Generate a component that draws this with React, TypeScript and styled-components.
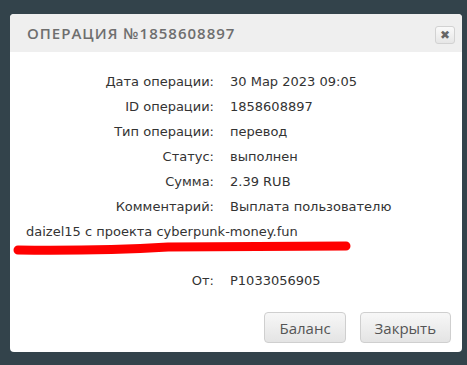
import React from 'react';
import styled, {createGlobalStyle} from 'styled-components';

const Global = createGlobalStyle`
  html, body {
    margin: 0;
    padding: 0;
    background: #33434b;
  }
  body {
    width: 467px;
    height: 365px;
    overflow: hidden;
    font-family: "DejaVu Sans", "Open Sans", sans-serif;
  }
`

const Dialog = styled.div`
  margin: 14px 0 0 10px;
  width: 452px;
  background: #fff;
  border-radius: 4px;
  overflow: hidden;
`

const Header = styled.div`
  height: 38px;
  background: #efefef;
  display: flex;
  align-items: center;
  justify-content: space-between;
  padding: 0 7px 0 17px;
  h2 {
    margin: 0;
    font-family: "Open Sans", sans-serif;
    font-size: 15px;
    font-weight: 600;
    letter-spacing: 1px;
    color: #6e6e6e;
  }
`

const CloseBtn = styled.button`
  width: 20px;
  height: 18px;
  margin-top: 4px;
  padding: 0;
  border: 1px solid #d2d2d2;
  border-radius: 3px;
  background: linear-gradient(#fafafa, #e6e6e6);
  color: #666;
  font-size: 12px;
  line-height: 16px;
  font-family: "DejaVu Sans", sans-serif;
`

const Body = styled.div`
  position: relative;
  padding: 17px 16px 0 16px;
  color: #333;
  font-size: 13px;
  line-height: 25px;
`

const Row = styled.div<{ $gap?: number }>`
  margin-bottom: ${p => p.$gap || 0}px;
`

const Label = styled.span`
  display: inline-block;
  width: 188px;
  margin-right: 16px;
  text-align: right;
`

const Strike = styled.svg`
  position: absolute;
  left: -10px;
  top: 0;
  pointer-events: none;
`

const Footer = styled.div`
  display: flex;
  justify-content: flex-end;
  gap: 14px;
  padding: 19px 11px 9px 0;
`

const Button = styled.button`
  height: 31px;
  padding: 0 14px;
  border: 1px solid #cfcfcf;
  border-radius: 4px;
  background: linear-gradient(#f7f7f7, #e4e4e4);
  color: #555;
  font-family: "Open Sans", sans-serif;
  font-size: 15px;
`

const rows: [string, string][] = [
    ['Дата операции:', '30 Мар 2023 09:05'],
    ['ID операции:', '1858608897'],
    ['Тип операции:', 'перевод'],
    ['Статус:', 'выполнен'],
    ['Сумма:', '2.39 RUB'],
    ['Комментарий:', 'Выплата пользователю'],
]

const App = () => {
    return (
        <>
            <Global/>
            <Dialog>
                <Header>
                    <h2>ОПЕРАЦИЯ №1858608897</h2>
                    <CloseBtn>✖</CloseBtn>
                </Header>
                <Body>
                    {rows.map(([k, v]) => (
                        <Row key={k}><Label>{k}</Label>{v}</Row>
                    ))}
                    <Row $gap={24}>daizel15 с проекта cyberpunk-money.fun</Row>
                    <Row><Label>От:</Label>P1033056905</Row>
                    <Strike width="360" height="220" viewBox="0 0 360 220">
                        <path d="M18 198 Q 100 199 168 195 L 346 194" stroke="#ff0000" strokeWidth="9" strokeLinecap="round" fill="none"/>
                    </Strike>
                </Body>
                <Footer>
                    <Button>Баланс</Button>
                    <Button>Закрыть</Button>
                </Footer>
            </Dialog>
        </>
    );
};

export default App;
